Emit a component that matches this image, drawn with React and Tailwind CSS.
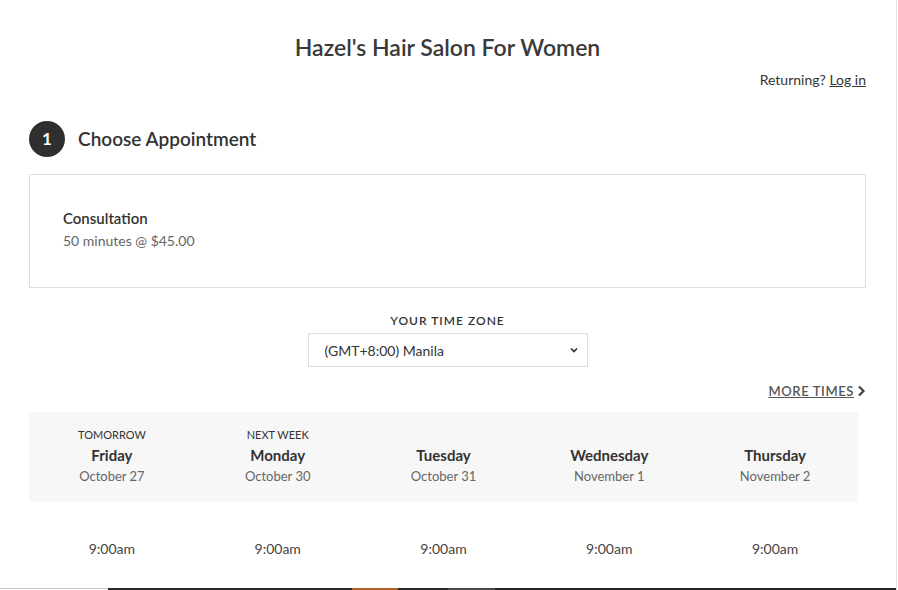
import React from 'react';

const days = [
  { tag: 'TOMORROW', name: 'Friday', date: 'October 27' },
  { tag: 'NEXT WEEK', name: 'Monday', date: 'October 30' },
  { tag: '', name: 'Tuesday', date: 'October 31' },
  { tag: '', name: 'Wednesday', date: 'November 1' },
  { tag: '', name: 'Thursday', date: 'November 2' },
];

function App() {
  return (
    <div className="min-h-screen w-[897px] bg-white border-r border-[#e2e2e2] text-[#333] font-['Lato','Noto_Sans',sans-serif] overflow-hidden">
      <div className="pl-[29px] pr-[30px] pt-[33px]">
        {/* header */}
        <h1 className="text-center text-[23px] leading-[28px] font-semibold text-[#3a3a3a]">
          Hazel's Hair Salon For Women
        </h1>
        <p className="mt-[9px] text-right text-[14px] leading-[20px] text-[#333]">
          Returning? <a href="#" className="underline">Log in</a>
        </p>

        {/* step 1 */}
        <div className="mt-[31px] flex items-center gap-[13px]">
          <div className="w-[36px] h-[36px] rounded-full bg-[#2f2f2f] text-white flex items-center justify-center text-[17px] font-bold">
            1
          </div>
          <h2 className="text-[19px] leading-[26px] font-semibold text-[#333]">Choose Appointment</h2>
        </div>

        <div className="mt-[17px] border border-[#dedede] px-[33px] pt-[32px] pb-[35px]">
          <div className="text-[15px] leading-[22px] font-semibold text-[#333]">Consultation</div>
          <div className="mt-[1px] text-[14px] leading-[22px] text-[#666]">50 minutes @ $45.00</div>
        </div>

        {/* time zone */}
        <div className="mt-[25px] flex flex-col items-center">
          <div className="text-[12px] leading-[16px] font-semibold tracking-[1px] text-[#333]">YOUR TIME ZONE</div>
          <div className="mt-[4px] w-[280px] h-[34px] border border-[#dedede] flex items-center justify-between pl-[16px] pr-[8px]">
            <span className="text-[14px] text-[#333]">(GMT+8:00) Manila</span>
            <svg width="10" height="10" viewBox="0 0 10 10">
              <path d="M2 3.5 L5 6.5 L8 3.5" fill="none" stroke="#333" strokeWidth="1.6" />
            </svg>
          </div>
        </div>

        <div className="mt-[15px] flex justify-end">
          <a href="#" className="flex items-center gap-[3px] text-[13px] leading-[18px] tracking-[0.6px] text-[#555] font-semibold">
            <span className="underline">MORE TIMES</span>
            <svg width="9" height="12" viewBox="0 0 9 12">
              <path d="M2 1.5 L6.5 6 L2 10.5" fill="none" stroke="#444" strokeWidth="2.2" />
            </svg>
          </a>
        </div>

        {/* days */}
        <div className="mt-[12px] w-[829px] bg-[#f7f7f7] grid grid-cols-5 pt-[16px] pb-[17px]">
          {days.map((d) => (
            <div key={d.name} className="flex flex-col items-center">
              <div className="h-[14px] text-[11px] leading-[14px] text-[#333]">{d.tag}</div>
              <div className="mt-[3px] text-[15px] leading-[20px] font-bold text-[#333]">{d.name}</div>
              <div className="mt-[2px] text-[13px] leading-[18px] text-[#666]">{d.date}</div>
            </div>
          ))}
        </div>

        <div className="mt-[37px] w-[829px] grid grid-cols-5">
          {days.map((d) => (
            <div key={d.name} className="text-center text-[14px] leading-[20px] text-[#444]">9:00am</div>
          ))}
        </div>
      </div>

      {/* cut-off footer */}
      <div className="mt-[29px] flex h-[3px]">
        <div className="w-[108px] border-t border-[#c8c8c8]" />
        <div className="w-[244px] bg-[#2a2829]" />
        <div className="w-[46px] bg-[#b05f28]" />
        <div className="w-[50px] bg-[#2a2829]" />
        <div className="w-[47px] bg-[#4a4849]" />
        <div className="flex-1 bg-[#262425]" />
      </div>
    </div>
  );
}

export default App;
